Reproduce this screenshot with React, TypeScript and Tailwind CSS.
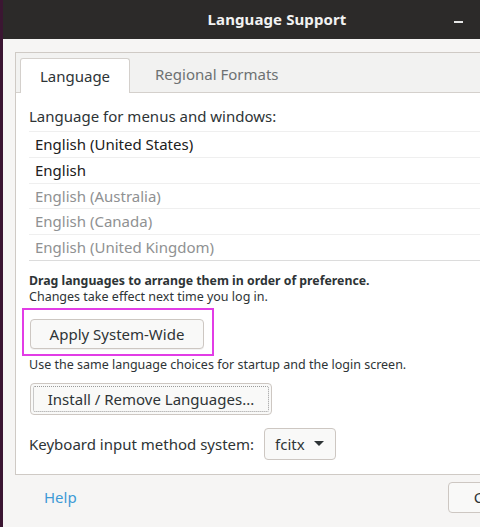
import React from 'react';

const languages = [
  { name: 'English (United States)', active: true },
  { name: 'English', active: true },
  { name: 'English (Australia)', active: false },
  { name: 'English (Canada)', active: false },
  { name: 'English (United Kingdom)', active: false },
];

const font = { fontFamily: '"Noto Sans", "Open Sans", sans-serif' };

const App: React.FC = () => {
  return (
    <div className="w-[480px] h-[527px] overflow-hidden bg-[#3b1632]" style={font}>
      <div className="ml-[3px] w-[548px] h-full flex flex-col bg-[#f6f5f4]">
        {/* header bar */}
        <div className="relative h-[39px] shrink-0 bg-[#2c2a29] flex items-center justify-center">
          <span className="text-[15px] font-bold text-[#f2f2f2] tracking-[0.1px]">Language Support</span>
          <div className="absolute left-[451px] top-[21px] flex items-center gap-6">
            <span className="block w-[9px] h-[2px] bg-[#e6e6e6]" />
          </div>
        </div>

        <div className="px-[12px] pt-[13px] flex-1 flex flex-col">
          {/* notebook */}
          <div className="border border-[#cfcac5]">
            <div className="h-[40px] bg-[#f2f2f1] border-b border-[#d4d0cc] flex items-end pl-[4px]">
              <div className="h-[35px] w-[110px] -mb-px bg-white border border-b-0 border-[#d4d0cc] rounded-t-[3px] flex items-center justify-center text-[15px] text-[#2e3436]">
                Language
              </div>
              <div className="h-[35px] px-[25px] flex items-center text-[15px] text-[#6d7172]">
                Regional Formats
              </div>
            </div>

            <div className="bg-white pl-[13px] pt-[14px] pb-[14px]">
              <div className="text-[15px] text-[#2e3436] leading-[18px]">Language for menus and windows:</div>
              <div className="mt-[6px] border-b border-[#dcdcdc]">
                {languages.map((l) => (
                  <div
                    key={l.name}
                    className={`h-[25.75px] border-t border-[#efefef] pl-[6px] flex items-center text-[15px] ${
                      l.active ? 'text-[#202020]' : 'text-[#8f9192]'
                    }`}
                  >
                    {l.name}
                  </div>
                ))}
              </div>

              <div className="mt-[12px] text-[12.3px] font-bold text-[#2e3436] leading-[16px]">
                Drag languages to arrange them in order of preference.
              </div>
              <div className="text-[12.5px] text-[#2e3436] leading-[16px]">Changes take effect next time you log in.</div>

              <div className="mt-[3px] ml-[-7px] w-[192px] h-[48px] border-2 border-[#e23ce6] flex items-start pt-[9px] pl-[6px]">
                <button className="w-[174px] h-[30px] rounded-[4px] border border-[#cdc7c2] bg-[#f9f9f8] shadow-[0_1px_0_rgba(0,0,0,0.05)] text-[15px] text-[#2e3436]">
                  Apply System-Wide
                </button>
              </div>

              <div className="mt-[1px] text-[12.5px] text-[#2e3436] leading-[16px]">
                Use the same language choices for startup and the login screen.
              </div>

              <button className="mt-[10px] ml-[1px] w-[242px] h-[32px] rounded-[4px] border border-[#cdc7c2] bg-[#f9f9f8] p-[2px] text-[15px] text-[#2e3436]">
                <span className="flex h-full w-full items-center justify-center border border-dotted border-[#9a9a9a] rounded-[2px]">
                  Install / Remove Languages...
                </span>
              </button>

              <div className="mt-[13px] flex items-center gap-[10px]">
                <span className="text-[15px] text-[#2e3436]">Keyboard input method system:</span>
                <div className="h-[32px] w-[72px] rounded-[4px] border border-[#cdc7c2] bg-[#f9f9f8] flex items-center pl-[10px] gap-[9px] text-[15px] text-[#2e3436]">
                  fcitx
                  <span className="w-0 h-0 border-l-[5px] border-r-[5px] border-t-[5px] border-l-transparent border-r-transparent border-t-[#2e3436]" />
                </div>
              </div>
            </div>
          </div>

          {/* dialog action row */}
          <div className="mt-[7px] flex items-center">
            <span className="ml-[29px] text-[15px] text-[#3e9ad6]">Help</span>
            <button className="ml-[371px] h-[31px] px-[25px] rounded-[4px] border border-[#cdc7c2] bg-[#f9f9f8] text-[15px] text-[#2e3436]">
              Close
            </button>
          </div>
        </div>
      </div>
    </div>
  );
};

export default App;
